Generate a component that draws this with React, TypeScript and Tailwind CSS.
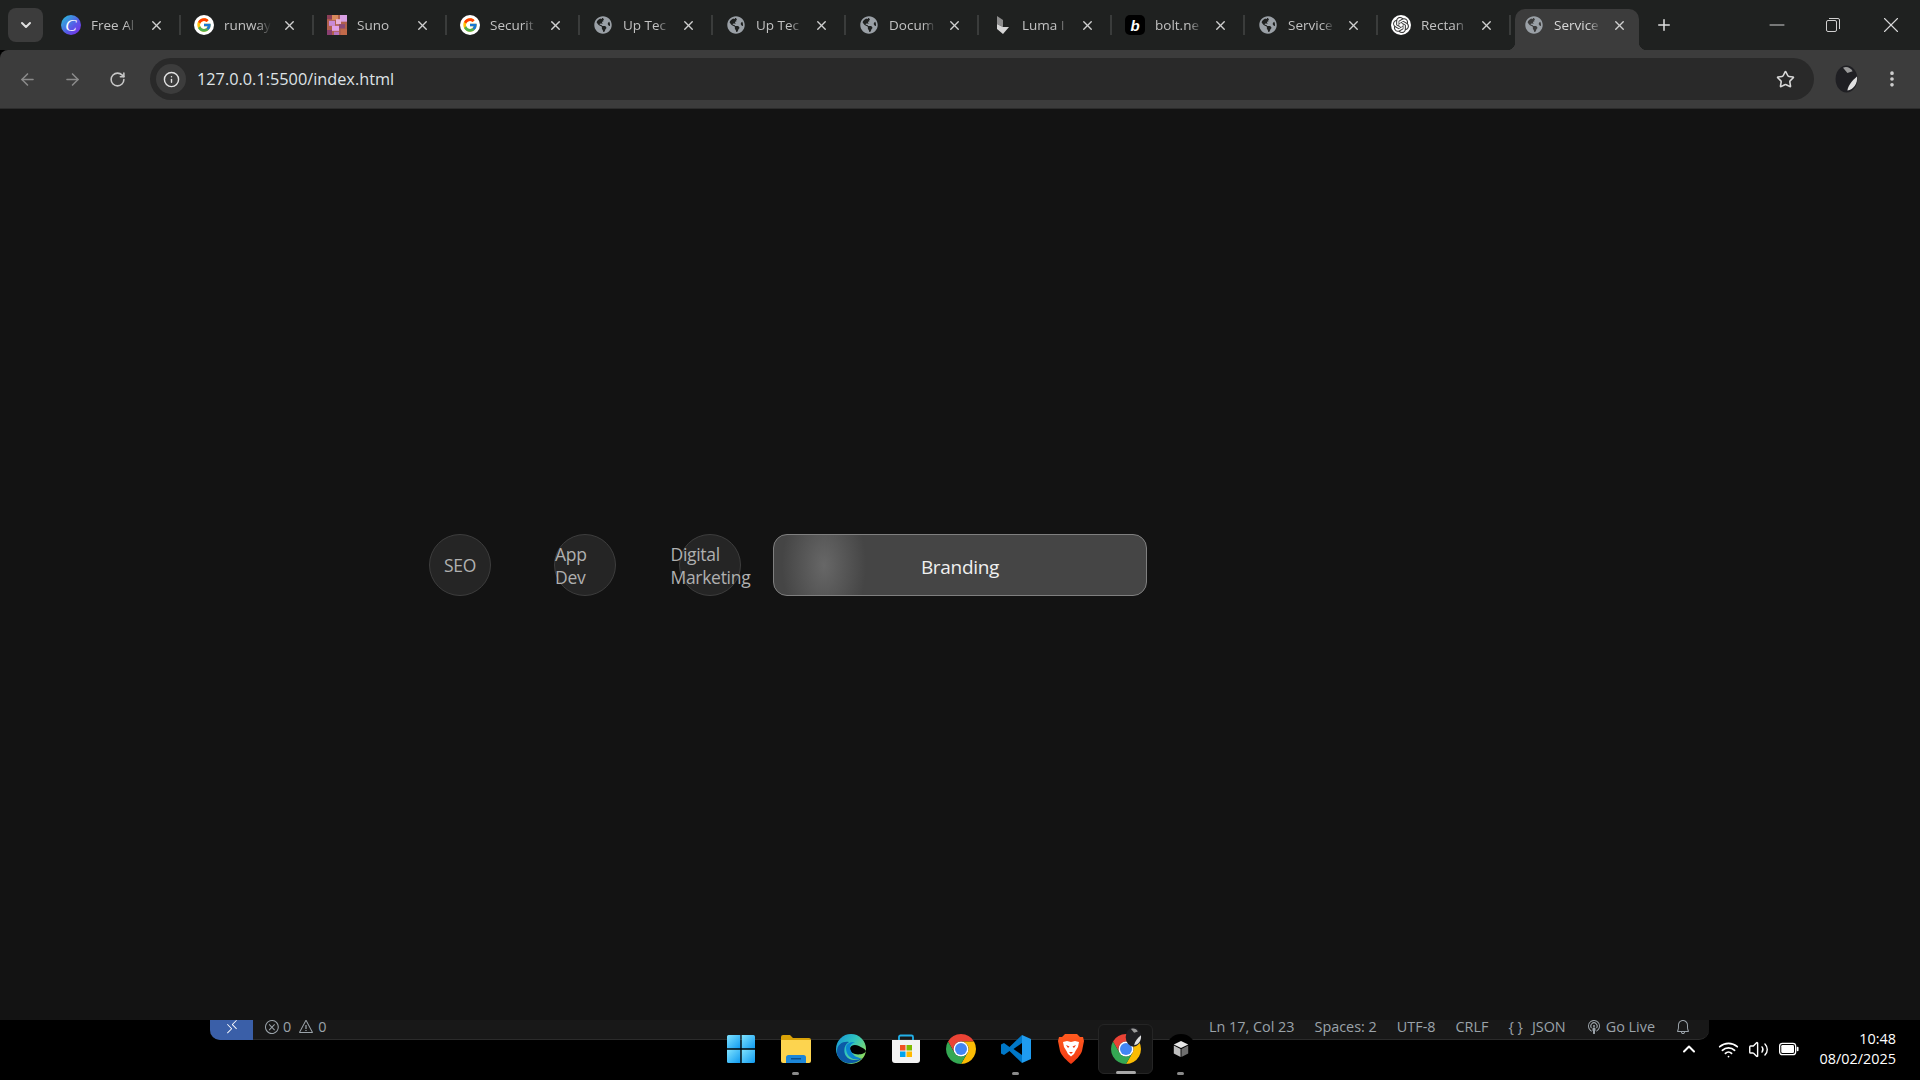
import type { ReactNode } from "react";
import {
  ArrowLeft,
  ArrowRight,
  ChevronDown,
  ChevronUp,
  EllipsisVertical,
  Info,
  Minus,
  Plus,
  RotateCw,
  Star,
  Volume2,
  Wifi,
  X,
} from "lucide-react";
import { FaGlobeAmericas } from "react-icons/fa";
import { FcGoogle } from "react-icons/fc";
import { SiOpenai } from "react-icons/si";
import { VscBell, VscBroadcast, VscError, VscRemote, VscWarning } from "react-icons/vsc";

const Globe = () => <FaGlobeAmericas className="h-[18px] w-[18px] text-[#9aa0a6]" />;

const Google = () => (
  <div className="flex h-5 w-5 items-center justify-center rounded-full bg-white">
    <FcGoogle className="h-4 w-4" />
  </div>
);

const CanvaIcon = () => (
  <div className="flex h-5 w-5 items-center justify-center rounded-full bg-[linear-gradient(135deg,#22c9d8,#5a55e8_60%,#7d2ae8)] font-['Liberation_Serif',serif] text-[17px] leading-none text-white italic">
    C
  </div>
);

const SunoIcon = () => (
  <svg viewBox="0 0 20 24" className="h-5 w-5" preserveAspectRatio="none">
    <rect width="20" height="24" fill="#b0604c" />
    <rect x="0" y="0" width="5" height="5" fill="#8c3f58" />
    <rect x="5" y="0" width="6" height="6" fill="#d98a5c" />
    <rect x="13" y="0" width="7" height="8" fill="#d8a0e4" />
    <rect x="9" y="5" width="5" height="6" fill="#e8b0d8" />
    <rect x="2" y="7" width="6" height="6" fill="#c98ad8" />
    <rect x="12" y="11" width="6" height="5" fill="#8a4a78" />
    <rect x="5" y="13" width="7" height="6" fill="#e2a2e8" />
    <rect x="14" y="17" width="6" height="7" fill="#c26a4a" />
    <rect x="0" y="18" width="5" height="6" fill="#8a3f70" />
    <rect x="7" y="20" width="5" height="4" fill="#b874c0" />
  </svg>
);

const LumaIcon = () => (
  <svg viewBox="0 0 20 20" className="h-5 w-5">
    <path d="M5 1L11 5V12L5 9Z" fill="#8d8d8d" />
    <path d="M5 9L11 12L17 12L11 19L5 14Z" fill="#d6d6d6" />
  </svg>
);

const BoltIcon = () => (
  <div className="flex h-5 w-5 items-center justify-center rounded-[5px] bg-black font-['Liberation_Sans',sans-serif] text-[15px] leading-none font-bold text-white italic">
    b
  </div>
);

const OpenAiIcon = () => (
  <div className="flex h-5 w-5 items-center justify-center rounded-full bg-white">
    <SiOpenai className="h-4 w-4 text-[#3c3c3c]" />
  </div>
);

interface Tab {
  title: string;
  icon: ReactNode;
  active?: boolean;
}

const tabs: Tab[] = [
  { title: "Free Al", icon: <CanvaIcon /> },
  { title: "runway", icon: <Google /> },
  { title: "Suno", icon: <SunoIcon /> },
  { title: "Securit", icon: <Google /> },
  { title: "Up Tec", icon: <Globe /> },
  { title: "Up Tec", icon: <Globe /> },
  { title: "Docum", icon: <Globe /> },
  { title: "Luma I", icon: <LumaIcon /> },
  { title: "bolt.ne", icon: <BoltIcon /> },
  { title: "Service", icon: <Globe /> },
  { title: "Rectan", icon: <OpenAiIcon /> },
  { title: "Service", icon: <Globe />, active: true },
];

function TabItem({ tab, last }: { tab: Tab; last: boolean }) {
  return (
    <div className="relative flex h-[50px] w-[133px] shrink-0 items-center">
      <div
        className={
          tab.active
            ? "relative ml-[4px] flex h-[41px] w-[124px] items-center self-end rounded-t-[10px] bg-[#3c3c3c] pb-[9px] pl-[9px]"
            : "ml-[13px] flex h-full items-center"
        }
      >
        {tab.active && (
          <>
            <span className="absolute bottom-0 -left-[8px] h-2 w-2 bg-[radial-gradient(circle_at_0_0,transparent_8px,#3c3c3c_8.5px)]" />
            <span className="absolute -right-[8px] bottom-0 h-2 w-2 bg-[radial-gradient(circle_at_100%_0,transparent_8px,#3c3c3c_8.5px)]" />
          </>
        )}
        <div className="flex h-5 w-5 items-center justify-center">{tab.icon}</div>
        <div
          className={`ml-[10px] w-[50px] overflow-hidden text-[13.5px] whitespace-nowrap [mask-image:linear-gradient(to_right,black_68%,transparent_94%)] ${
            tab.active ? "text-[#d8d8d8]" : "text-[#c2c2c2]"
          }`}
        >
          {tab.title}
        </div>
        <X className="ml-[8px] h-[15px] w-[15px] text-[#d0d0d0]" strokeWidth={2.2} />
      </div>
      {!tab.active && !last && <div className="ml-auto h-5 w-[2px] bg-[#3a3c3b]" />}
    </div>
  );
}

const WindowsIcon = () => (
  <svg viewBox="0 0 30 30" className="h-[30px] w-[30px]">
    <defs>
      <linearGradient id="win" x1="0" y1="0" x2="1" y2="1">
        <stop offset="0" stopColor="#7fe3ff" />
        <stop offset="1" stopColor="#0f9af0" />
      </linearGradient>
    </defs>
    <path d="M1 2.500a1.500 1.500 0 0 1 1.500-1.500H14.300V14.300H1Z" fill="url(#win)" />
    <path d="M15.700 1H27.500a1.500 1.500 0 0 1 1.500 1.500V14.300H15.700Z" fill="url(#win)" />
    <path d="M1 15.700H14.300V29H2.500A1.500 1.500 0 0 1 1 27.500Z" fill="url(#win)" />
    <path d="M15.700 15.700H29V27.500A1.500 1.500 0 0 1 27.500 29H15.700Z" fill="url(#win)" />
  </svg>
);

const FolderIcon = () => (
  <svg viewBox="0 0 30 30" className="h-[30px] w-[30px]">
    <path d="M0 3a2 2 0 0 1 2-2H9l3 3H28a2 2 0 0 1 2 2V10H0Z" fill="#d9a208" />
    <path d="M0 6H30V27a2 2 0 0 1-2 2H2a2 2 0 0 1-2-2Z" fill="#fdd44f" />
    <path d="M5 29V23.500A2.500 2.500 0 0 1 7.500 21H22.500A2.500 2.500 0 0 1 25 23.500V29Z" fill="#1c86d8" />
    <rect x="10" y="24" width="10" height="1.500" fill="#0a4f8f" />
  </svg>
);

const EdgeIcon = () => (
  <svg viewBox="0 0 30 30" className="h-[30px] w-[30px]">
    <defs>
      <linearGradient id="edgeTop" x1="0" y1="0" x2="1" y2="0.700">
        <stop offset="0" stopColor="#1590d8" />
        <stop offset="0.500" stopColor="#2ec4c0" />
        <stop offset="1" stopColor="#8fdc5c" />
      </linearGradient>
    </defs>
    <circle cx="15" cy="15" r="15" fill="url(#edgeTop)" />
    <path d="M1 20C0 10 7 7 13 8 8 11 7 17 10 22 13 27 21 27 26 24 21 31 5 32 1 20Z" fill="#0c5aa6" />
    <path d="M14 15C14 11 19 10 23 12 26 13.500 29 15 30 17 29 20 23 21 19 20 15 19 14 17 14 15Z" fill="#000" />
    <path d="M10 14C10 9 15 8 19 8 14 10 13 13 15 17 17 22 22 24 25 24 20 28 10 24 10 14Z" fill="#0a84d0" />
  </svg>
);

const StoreIcon = () => (
  <svg viewBox="0 0 30 30" className="h-[30px] w-[30px]">
    <path d="M8 6V3a1.500 1.500 0 0 1 1.500-1.500H20.500A1.500 1.500 0 0 1 22 3V6" fill="none" stroke="#22b0e8" strokeWidth="1.800" />
    <path d="M1 6H29V26a3 3 0 0 1-3 3H4a3 3 0 0 1-3-3Z" fill="#f3f3f3" />
    <rect x="9" y="11" width="5.500" height="5.500" fill="#f25022" />
    <rect x="15.500" y="11" width="5.500" height="5.500" fill="#7fba00" />
    <rect x="9" y="17.500" width="5.500" height="5.500" fill="#00a4ef" />
    <rect x="15.500" y="17.500" width="5.500" height="5.500" fill="#ffb900" />
  </svg>
);

const ChromeIcon = () => (
  <svg viewBox="4 4 40 40" className="h-[30px] w-[30px]">
    <path d="M24 4A20 20 0 0 1 41.320 14H24A10 10 0 0 0 15.340 29L6.680 14A20 20 0 0 1 24 4Z" fill="#ea4335" />
    <path d="M41.320 14A20 20 0 0 1 24 44L32.660 29A10 10 0 0 0 24 14Z" fill="#fbbc04" />
    <path d="M6.680 14L15.340 29A10 10 0 0 0 32.660 29L24 44A20 20 0 0 1 6.680 14Z" fill="#34a853" />
    <circle cx="24" cy="24" r="10" fill="#fff" />
    <circle cx="24" cy="24" r="8" fill="#4285f4" />
  </svg>
);

const CodeIcon = () => (
  <svg viewBox="0 0 30 30" className="h-[30px] w-[30px]">
    <path d="M21 1L30 5V25L21 29Z" fill="#1f9cf0" />
    <path d="M21 1L8.500 13 3 9 0 10.500V19.500L3 21 8.500 17 21 29V21L12.500 15 21 9Z" fill="#0078c8" />
  </svg>
);

const BraveIcon = () => (
  <svg viewBox="0 0 26 30" className="h-[30px] w-[26px]">
    <defs>
      <linearGradient id="brave" x1="0" y1="0" x2="0" y2="1">
        <stop offset="0" stopColor="#ff5a1f" />
        <stop offset="1" stopColor="#f23a14" />
      </linearGradient>
    </defs>
    <path d="M7 0H19L22 3 25 3 26 7 24 17C23 21 17 27 13 30 9 27 3 21 2 17L0 7 1 3 4 3Z" fill="url(#brave)" />
    <path d="M5 8L9 7 13 8 17 7 21 8 20 13 17.500 17 16 20 13 22.500 10 20 8.500 17 6 13Z" fill="#fff" />
    <path d="M8 11L11.500 12.500 10 14ZM18 11L14.500 12.500 16 14ZM11 18H15L13 20Z" fill="#f23a14" />
  </svg>
);

const CubeIcon = () => (
  <div className="flex h-[30px] w-[30px] items-center justify-center rounded-full bg-black">
    <svg viewBox="0 0 20 20" className="h-[18px] w-[18px]">
      <path d="M10 1L18 5 10 9 2 5Z" fill="#e8e8e8" />
      <path d="M2 6L9.500 10V19L2 15Z" fill="#bdbdbd" />
      <path d="M18 6L10.500 10V19L18 15Z" fill="#6e6e6e" />
    </svg>
  </div>
);

const Avatar = ({ className }: { className: string }) => (
  <svg viewBox="0 0 26 32" className={className}>
    <ellipse cx="13" cy="16" rx="12.500" ry="15.500" fill="#1f1f23" />
    <path d="M9 3C13 1 18 3 20 7L14 9Z" fill="#9a9a9a" />
    <path d="M14 29C15 23 19 18 25 13 26 21 21 28 14 29Z" fill="#e0e0e0" />
  </svg>
);

const taskbarIcons: { icon: ReactNode; mark?: "dot" | "wide" }[] = [
  { icon: <WindowsIcon /> },
  { icon: <FolderIcon />, mark: "dot" },
  { icon: <EdgeIcon /> },
  { icon: <StoreIcon /> },
  { icon: <ChromeIcon /> },
  { icon: <CodeIcon />, mark: "dot" },
  { icon: <BraveIcon /> },
  { icon: <ChromeIcon />, mark: "wide" },
  { icon: <CubeIcon />, mark: "dot" },
];

function ServiceCircle({ children, width, className }: { children: ReactNode; width: string; className?: string }) {
  return (
    <div className={`flex h-[62px] w-[62px] shrink-0 items-center justify-center rounded-full border border-[#3d3d3d] bg-[#252525] pt-[2px] text-[17.5px] leading-[23px] tracking-[-0.3px] text-[#b0b0b0] ${className ?? ""}`}>
      <span className={`shrink-0 ${width}`}>{children}</span>
    </div>
  );
}

export default function App() {
  return (
    <div className="flex h-screen w-full flex-col overflow-hidden bg-black font-['Open_Sans',sans-serif]">
      {/* TAB STRIP */}
      <div className="flex h-[50px] shrink-0 items-end bg-[#1f2120]">
        <div className="mb-[8px] ml-[8px] flex h-[34px] w-[35px] items-center justify-center self-end rounded-lg bg-[#3c3c3c]">
          <ChevronDown className="h-4 w-4 text-[#e0e0e0]" strokeWidth={3} />
        </div>
        <div className="ml-[5px] flex items-end">
          {tabs.map((tab, i) => (
            <TabItem key={i} tab={tab} last={i === tabs.length - 1} />
          ))}
        </div>
        <div className="ml-[11px] flex h-[50px] items-center">
          <Plus className="h-[18px] w-[18px] text-[#e0e0e0]" strokeWidth={2} />
        </div>
        <div className="ml-auto flex h-[50px] items-center pr-[16px]">
          <Minus className="h-6 w-6 text-[#d0d0d0]" strokeWidth={1} />
          <svg viewBox="0 0 14 14" className="ml-[37px] h-[14px] w-[14px] text-[#d0d0d0]" fill="none" stroke="currentColor">
            <rect x="0.500" y="2.500" width="10" height="11" rx="1.500" />
            <path d="M3 0.500H12A1.500 1.500 0 0 1 13.500 2V11" />
          </svg>
          <X className="ml-[38px] h-[26px] w-[26px] text-[#d8d8d8]" strokeWidth={1} />
        </div>
      </div>

      {/* TOOLBAR */}
      <div className="flex h-[58px] shrink-0 items-center rounded-tl-lg bg-[#3c3c3c] pr-[18px] pl-[18px]">
        <ArrowLeft className="h-[19px] w-[19px] text-[#8a8a8a]" />
        <ArrowRight className="ml-[26px] h-[19px] w-[19px] text-[#8a8a8a]" />
        <RotateCw className="ml-[27px] h-[17px] w-[17px] text-[#c8c8c8]" strokeWidth={2.2} />
        <div className="ml-[24px] flex h-[42px] flex-1 items-center rounded-full bg-[#292929] pr-[19px] pl-[6px]">
          <div className="flex h-[30px] w-[30px] items-center justify-center rounded-full bg-[#3c3c3c]">
            <Info className="h-[17px] w-[17px] text-[#e3e3e3]" strokeWidth={2} />
          </div>
          <span className="ml-[11px] text-[16.300px] text-[#dfe3e6]">127.0.0.1:5500/index.html</span>
          <Star className="ml-auto h-[19px] w-[19px] text-[#d8d8d8]" strokeWidth={2} />
        </div>
        <Avatar className="ml-[20px] h-[28px] w-[25px]" />
        <EllipsisVertical className="ml-[23px] h-[20px] w-[20px] text-[#d0d0d0]" strokeWidth={2.4} />
      </div>

      {/* PAGE */}
      <div className="flex flex-1 items-center border-t border-[#2c2c2c] bg-[#131313] pl-[429px]">
        <ServiceCircle width="w-auto" className="mr-[63px]">SEO</ServiceCircle>
        <ServiceCircle width="w-[60px]" className="mr-[63px]">App Dev</ServiceCircle>
        <ServiceCircle width="w-[79px]" className="mr-[32px]">Digital Marketing</ServiceCircle>
        <div className="flex h-[62px] w-[374px] shrink-0 items-center justify-center rounded-[14px] border border-[#7f7f7f] bg-[#454545] bg-[radial-gradient(ellipse_42px_70px_at_50px_50%,#676767,#454545)] pt-[5px] text-[19px] font-medium tracking-[-0.3px] text-[#f0f0f0]">
          Branding
        </div>
      </div>

      {/* STATUS BAR + TASKBAR */}
      <div className="h-[60px] shrink-0 bg-black">
        <div className="ml-[210px] flex h-[20px] w-[1499px] items-center rounded-b-[10px] border-b border-[#2b2b2b] bg-[#181818] pr-[18px] pb-[5px] text-[14.400px] text-[#9ba3aa]">
          <div className="-mb-[5px] flex h-[20px] w-[43px] items-center justify-center rounded-bl-[10px] bg-[#3a5fa8] pb-[5px]">
            <VscRemote className="h-4 w-4 text-white" />
          </div>
          <VscError className="ml-[11px] h-4 w-4 shrink-0" />
          <span className="ml-[3px]">0</span>
          <VscWarning className="ml-[7px] h-4 w-4 shrink-0" />
          <span className="ml-[4px]">0</span>
          <span className="ml-auto">Ln 17, Col 23</span>
          <span className="ml-[20px]">Spaces: 2</span>
          <span className="ml-[20px]">UTF-8</span>
          <span className="ml-[20px]">CRLF</span>
          <span className="ml-[20px]">{"{ }"}</span>
          <span className="ml-[9px]">JSON</span>
          <VscBroadcast className="ml-[20px] h-4 w-4 shrink-0" />
          <span className="ml-[4px]">Go Live</span>
          <VscBell className="ml-[20px] h-4 w-4 shrink-0" />
        </div>
        <div className="relative -mt-[18px] grid h-[54px] grid-cols-[1fr_auto_1fr]">
          <div />
          <div className="ml-[1px] flex items-center">
            {taskbarIcons.map((item, i) => (
              <div
                key={i}
                className={`relative flex h-[50px] w-[55px] items-center justify-center ${i === 7 ? "rounded-md border border-[#252525] bg-[#161616]" : ""}`}
              >
                {item.icon}
                {item.mark === "dot" && <span className="absolute -bottom-[1px] h-[3px] w-[7px] rounded-full bg-[#8a8a8a]" />}
                {item.mark === "wide" && <span className="absolute -bottom-[1px] h-[3px] w-[20px] rounded-full bg-[#a8a8a8]" />}
                {i === 7 && <Avatar className="absolute top-[2px] left-[25px] h-[20px] w-[19px]" />}
              </div>
            ))}
          </div>
          <div className="flex items-center justify-end pr-[24px] text-white">
            <ChevronUp className="h-[20px] w-[20px]" strokeWidth={2.4} />
            <Wifi className="ml-[19px] h-[21px] w-[21px]" strokeWidth={2} />
            <Volume2 className="ml-[9px] h-[21px] w-[21px]" strokeWidth={1.6} />
            <svg viewBox="0 0 22 14" className="ml-[10px] h-[14px] w-[20px]">
              <rect x="0.700" y="0.700" width="17.600" height="12.600" rx="3" fill="none" stroke="#fff" strokeWidth="1.400" />
              <rect x="2.500" y="2.500" width="14" height="9" rx="1.500" fill="#fff" />
              <rect x="19.500" y="4.500" width="2" height="5" rx="1" fill="#fff" />
            </svg>
            <div className="ml-[21px] text-right text-[14.400px] leading-[20px]">
              <div>10:48</div>
              <div>08/02/2025</div>
            </div>
          </div>
        </div>
      </div>
    </div>
  );
}
